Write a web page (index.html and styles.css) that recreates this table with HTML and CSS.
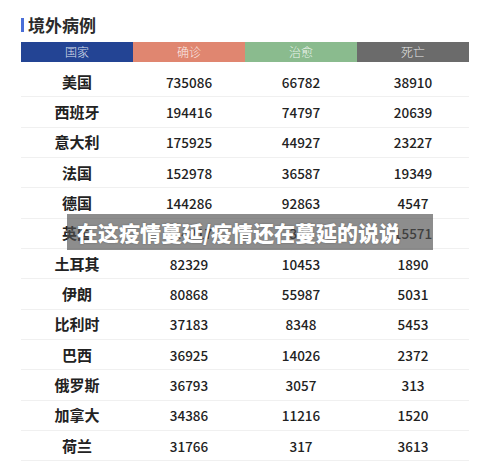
FILE: index.html
```html
<!DOCTYPE html>
<html lang="zh">
<head>
<meta charset="utf-8">
<link rel="stylesheet" href="styles.css">
</head>
<body>
<div class="page">
  <div class="title"><span class="mark"></span><span class="title-text">境外病例</span></div>
  <div class="table">
    <div class="head">
      <div class="hc c1">国家</div>
      <div class="hc c2">确诊</div>
      <div class="hc c3">治愈</div>
      <div class="hc c4">死亡</div>
    </div>
    <div class="body">
      <div class="row"><span class="name">美国</span><span>735086</span><span>66782</span><span>38910</span></div>
      <div class="row"><span class="name">西班牙</span><span>194416</span><span>74797</span><span>20639</span></div>
      <div class="row"><span class="name">意大利</span><span>175925</span><span>44927</span><span>23227</span></div>
      <div class="row"><span class="name">法国</span><span>152978</span><span>36587</span><span>19349</span></div>
      <div class="row"><span class="name">德国</span><span>144286</span><span>92863</span><span>4547</span></div>
      <div class="row"><span class="name">英国</span><span>114217</span><span>344</span><span>15571</span></div>
      <div class="row"><span class="name">土耳其</span><span>82329</span><span>10453</span><span>1890</span></div>
      <div class="row"><span class="name">伊朗</span><span>80868</span><span>55987</span><span>5031</span></div>
      <div class="row"><span class="name">比利时</span><span>37183</span><span>8348</span><span>5453</span></div>
      <div class="row"><span class="name">巴西</span><span>36925</span><span>14026</span><span>2372</span></div>
      <div class="row"><span class="name">俄罗斯</span><span>36793</span><span>3057</span><span>313</span></div>
      <div class="row"><span class="name">加拿大</span><span>34386</span><span>11216</span><span>1520</span></div>
      <div class="row"><span class="name">荷兰</span><span>31766</span><span>317</span><span>3613</span></div>
    </div>
  </div>
  <div class="banner">在这疫情蔓延/疫情还在蔓延的说说</div>
</div>
</body>
</html>
```
FILE: styles.css
```css
html, body {
  margin: 0;
  padding: 0;
  background: #ffffff;
}
body {
  font-family: "Noto Sans CJK SC", "Noto Sans", sans-serif;
  color: #222;
}
.page {
  position: relative;
  width: 500px;
  height: 465px;
  overflow: hidden;
  padding: 13px 0 0 21px;
  box-sizing: border-box;
}
.title {
  display: flex;
  align-items: center;
  height: 24px;
  gap: 4px;
}
.mark {
  width: 3px;
  height: 14px;
  background: #4a6fd8;
}
.title-text {
  font-size: 17px;
  font-weight: 700;
  color: #2a2a2a;
  line-height: 24px;
}
.table {
  margin-top: 5px;
  width: 448px;
}
.head {
  display: grid;
  grid-template-columns: repeat(4, 112px);
  height: 20px;
}
.hc {
  color: rgba(255,255,255,0.85);
  font-size: 12px;
  font-weight: 300;
  line-height: 20px;
  text-align: center;
}
.c1 { background: #234494; }
.c2 { background: #e08670; }
.c3 { background: #8abb8e; }
.c4 { background: #6b6b6b; }
.body {
  margin-top: 5px;
}
.row {
  display: grid;
  grid-template-columns: repeat(4, 112px);
  height: 29.33px;
  border-bottom: 1px solid #f0f0f0;
  align-items: center;
  font-size: 13.5px;
  font-weight: 500;
  color: #222;
  text-align: center;
}
.row span {
  line-height: 18px;
}
.name {
  font-size: 15px;
  font-weight: 700;
}
.banner {
  position: absolute;
  left: 67px;
  top: 214px;
  width: 366px;
  height: 36px;
  box-sizing: border-box;
  padding-left: 10px;
  background: rgba(80,80,80,0.65);
  color: #fff;
  font-size: 21px;
  font-weight: 900;
  line-height: 36px;
  white-space: nowrap;
  text-shadow: 0 0 2px rgba(0,0,0,0.3);
}
```
